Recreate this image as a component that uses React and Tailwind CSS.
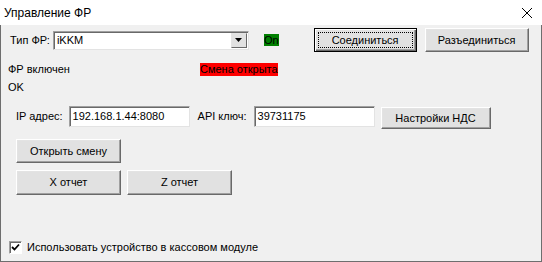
import React from 'react';

const font = { fontFamily: '"Liberation Sans", Arial, sans-serif' };

function Btn({ children, className = '', isDefault = false }) {
  return (
    <button
      className={`relative flex items-center justify-center bg-[#e1e1e1] text-[11px] text-black ${
        isDefault
          ? 'border border-black shadow-[inset_1px_1px_0_#fff,inset_-1px_-1px_0_#696969,inset_-2px_-2px_0_#a0a0a0]'
          : 'border-t border-l border-t-white border-l-white border-r border-b border-r-[#696969] border-b-[#696969] shadow-[inset_-1px_-1px_0_#a0a0a0,inset_1px_1px_0_#e3e3e3]'
      } ${className}`}
    >
      {isDefault && (
        <span className="absolute inset-[3px] border border-dotted border-black" />
      )}
      <span className="relative">{children}</span>
    </button>
  );
}

function Field({ value, className = '' }) {
  return (
    <div
      className={`flex items-center bg-white border-t border-l border-t-[#a0a0a0] border-l-[#a0a0a0] border-r border-b border-r-[#e3e3e3] border-b-[#e3e3e3] shadow-[inset_1px_1px_0_#696969] pl-[3px] text-[11px] ${className}`}
    >
      {value}
    </div>
  );
}

export default function App() {
  return (
    <div className="w-[542px] h-[262px] flex flex-col bg-[#f0f0f0] text-black" style={font}>
      {/* Title bar */}
      <div className="h-[25px] bg-white flex items-center justify-between pl-[4px] pr-[9px] shrink-0">
        <span className="text-[12px]">Управление ФР</span>
        <svg width="12" height="12" viewBox="0 0 12 12" className="mt-[1px]">
          <path d="M1 1 L11 11 M11 1 L1 11" stroke="#000" strokeWidth="1" />
        </svg>
      </div>

      {/* Body */}
      <div className="flex-1 flex flex-col border-l border-r border-b border-[#6e6e6e] text-[11px]">
        {/* Row 1 */}
        <div className="flex items-center h-[24px] mt-[3px] pl-[9px]">
          <span>Тип ФР:</span>
          <div className="ml-[3px] w-[196px] h-[19px] flex items-center justify-between bg-white border-t border-l border-t-[#a0a0a0] border-l-[#a0a0a0] border-r border-b border-r-[#e3e3e3] border-b-[#e3e3e3] shadow-[inset_1px_1px_0_#696969]">
            <span className="pl-[3px]">iKKM</span>
            <div className="w-[16px] h-[15px] mr-[1px] flex items-center justify-center bg-[#e1e1e1] border-t border-l border-t-[#e3e3e3] border-l-[#e3e3e3] border-r border-b border-r-[#696969] border-b-[#696969]">
              <svg width="7" height="4" viewBox="0 0 7 4">
                <path d="M0 0 H7 L3.5 4 Z" fill="#000" />
              </svg>
            </div>
          </div>
          <span className="ml-[15px] bg-[#008000] leading-[12px]">On</span>
          <Btn isDefault className="ml-[35px] w-[103px] h-[24px]">Соединиться</Btn>
          <Btn className="ml-[8px] w-[104px] h-[24px]">Разъединиться</Btn>
        </div>

        {/* Row 2 */}
        <div className="flex items-center h-[13px] mt-[11px] pl-[7px]">
          <span className="w-[192px]">ФР включен</span>
          <span className="bg-[#ff0000] leading-[13px]">Смена открыта</span>
        </div>

        {/* Row 3 */}
        <div className="flex items-center h-[13px] mt-[5px] pl-[7px]">
          <span>OK</span>
        </div>

        {/* Row 4 */}
        <div className="flex items-start h-[23px] mt-[12px] pl-[15px]">
          <span className="h-[21px] flex items-center">IP адрес:</span>
          <Field value="192.168.1.44:8080" className="ml-[6px] w-[121px] h-[21px]" />
          <span className="h-[21px] flex items-center ml-[8px]">API ключ:</span>
          <Field value="39731175" className="ml-[7px] w-[121px] h-[21px]" />
          <Btn className="ml-[6px] mt-[1px] w-[110px] h-[22px]">Настройки НДС</Btn>
        </div>

        {/* Row 5 */}
        <div className="flex mt-[10px] pl-[15px]">
          <Btn className="w-[105px] h-[24px]">Открыть смену</Btn>
        </div>

        {/* Row 6 */}
        <div className="flex mt-[7px] pl-[15px] gap-[6px]">
          <Btn className="w-[105px] h-[25px]">X отчет</Btn>
          <Btn className="w-[105px] h-[25px]">Z отчет</Btn>
        </div>

        {/* Checkbox */}
        <div className="flex items-center mt-[44px] pl-[8px]">
          <div className="w-[13px] h-[13px] bg-white border-t border-l border-t-[#a0a0a0] border-l-[#a0a0a0] border-r border-b border-r-white border-b-white shadow-[inset_1px_1px_0_#696969] flex items-center justify-center">
            <svg width="9" height="9" viewBox="0 0 9 9">
              <path d="M1 4 L3.5 6.5 L8 1.5" stroke="#000" strokeWidth="1.8" fill="none" />
            </svg>
          </div>
          <span className="ml-[5px]">Использовать устройство в кассовом модуле</span>
        </div>
      </div>
    </div>
  );
}
